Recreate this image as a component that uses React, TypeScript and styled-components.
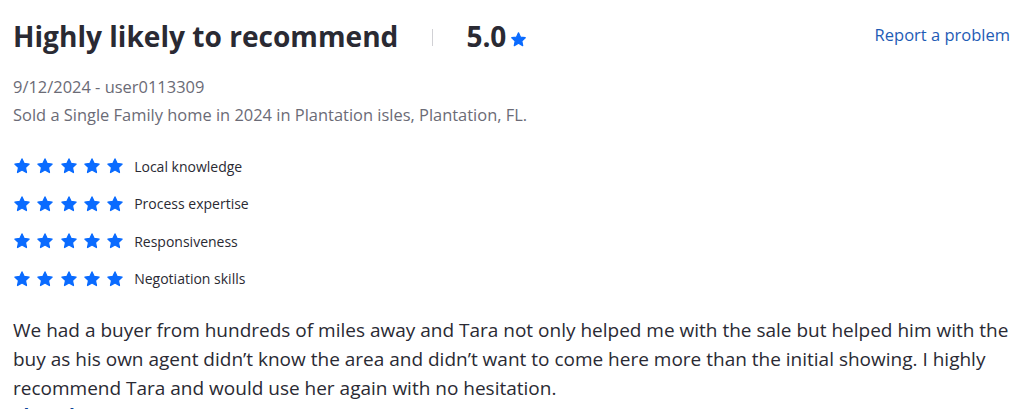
import React from "react";
import styled, { createGlobalStyle } from "styled-components";

const Global = createGlobalStyle`
  html, body { margin: 0; padding: 0; background: #fff; }
  body { font-family: "Open Sans", "Liberation Sans", sans-serif; color: #2a2a33; }
`;

const Page = styled.div`
  padding: 14px 14px 0 13px;
  height: 409px;
  box-sizing: border-box;
  overflow: hidden;
`;

const Header = styled.div`
  display: flex;
  align-items: center;
  justify-content: space-between;
  height: 44px;
`;

const TitleGroup = styled.div`
  display: flex;
  align-items: center;
`;

const Title = styled.h2`
  margin: 0;
  font-size: 28.1px;
  font-weight: 700;
  color: #2a2a33;
`;

const Divider = styled.span`
  width: 1px;
  height: 17px;
  background: #d1d1d5;
  margin: 3px 33px 0 34px;
`;

const Score = styled.span`
  font-size: 28px;
  font-weight: 700;
  color: #2a2a33;
  display: flex;
  align-items: center;
  gap: 4px;
`;

const StarSlot = styled.span`
  display: flex;
  margin-top: 6px;
`;

const ReportLink = styled.a`
  font-size: 16.5px;
  color: #1f5cb5;
  text-decoration: none;
  margin-top: -3px;
`;

const Meta = styled.div`
  margin-top: 15px;
  font-size: 16.45px;
  line-height: 28px;
  color: #6b6b76;
`;

const Ratings = styled.div`
  margin-top: 26px;
  display: flex;
  flex-direction: column;
  gap: 15.67px;
`;

const RatingRow = styled.div`
  display: flex;
  align-items: center;
  height: 22px;
`;

const Stars = styled.div`
  display: flex;
  gap: 5.3px;
  margin-right: 10px;
`;

const Label = styled.span`
  font-size: 14px;
  color: #2a2a33;
`;

const Body = styled.p`
  margin: 26.5px 0 0 0;
  font-size: 19px;
  line-height: 28.6px;
  color: #2a2a33;
`;

const More = styled.a`
  display: block;
  font-size: 19px;
  line-height: 28.6px;
  color: #0d4599;
  font-weight: 700;
  text-decoration: none;
`;

const Star = ({ size }: { size: number }) => (
  <svg width={size} height={size} viewBox="0 0 24 24">
    <path
      d="M12 2.6l2.85 6.1 6.65.78-4.9 4.56 1.3 6.58L12 17.3l-5.9 3.32 1.3-6.58-4.9-4.56 6.65-.78z"
      fill="#0a6bff"
      stroke="#0a6bff"
      strokeWidth="1.8"
      strokeLinejoin="round"
    />
  </svg>
);

const categories = ["Local knowledge", "Process expertise", "Responsiveness", "Negotiation skills"];

export default function App() {
  return (
    <>
      <Global />
      <Page>
        <Header>
          <TitleGroup>
            <Title>Highly likely to recommend</Title>
            <Divider />
            <Score>
              5.0
              <StarSlot>
                <Star size={17} />
              </StarSlot>
            </Score>
          </TitleGroup>
          <ReportLink href="#">Report a problem</ReportLink>
        </Header>
        <Meta>
          9/12/2024 - user0113309
          <br />
          Sold a Single Family home in 2024 in Plantation isles, Plantation, FL.
        </Meta>
        <Ratings>
          {categories.map((c) => (
            <RatingRow key={c}>
              <Stars>
                {[0, 1, 2, 3, 4].map((i) => (
                  <Star key={i} size={18} />
                ))}
              </Stars>
              <Label>{c}</Label>
            </RatingRow>
          ))}
        </Ratings>
        <Body>
          We had a buyer from hundreds of miles away and Tara not only helped me with the sale but helped him with the
          buy as his own agent didn’t know the area and didn’t want to come here more than the initial showing. I highly
          recommend Tara and would use her again with no hesitation.
        </Body>
        <More href="#">Show less</More>
      </Page>
    </>
  );
}
